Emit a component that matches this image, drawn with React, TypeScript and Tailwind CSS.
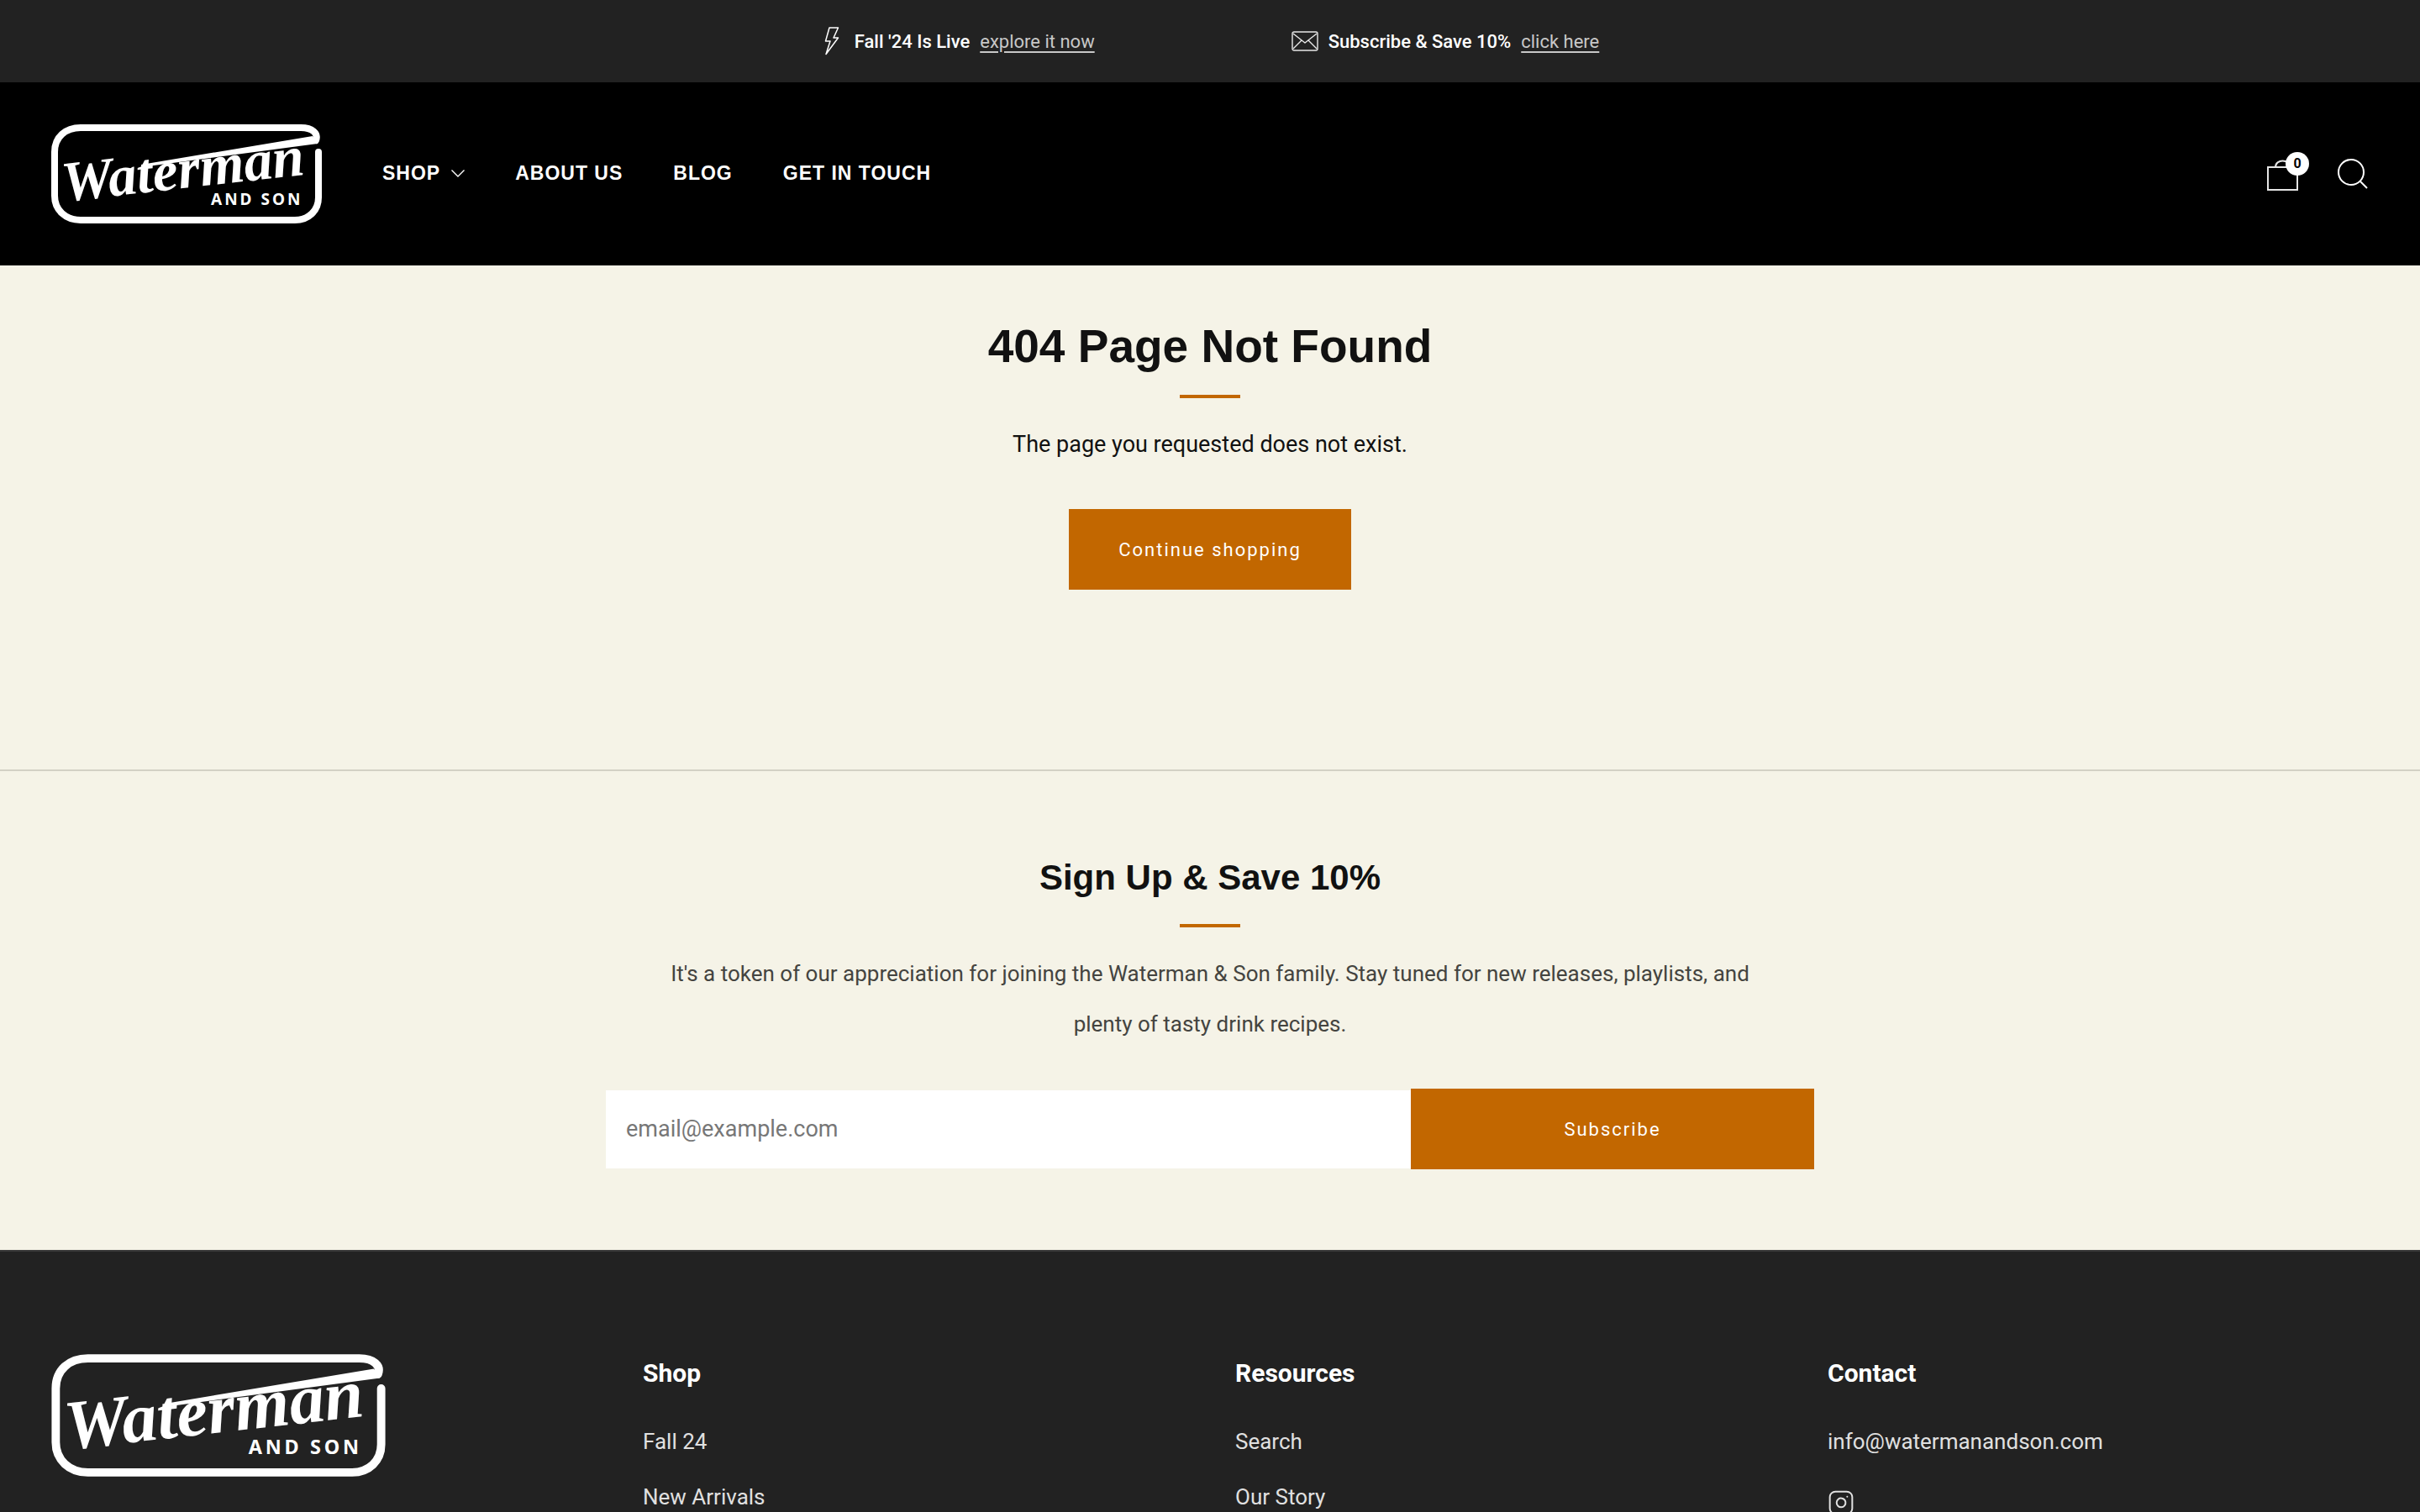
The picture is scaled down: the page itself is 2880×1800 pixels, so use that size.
import React from 'react';
import { Instagram } from 'lucide-react';

const Logo = ({ className }: { className: string }) => (
  <svg viewBox="0 0 324 120" className={className} fill="none">
    <path
      d="M319 34 V88 C319 104 307 115 291 115 H36 C18 115 5 103 5 86 V34 C5 16 18 5 36 5 H298 C312 5 319 12 316 20"
      stroke="white"
      strokeWidth="8"
      strokeLinecap="round"
      strokeLinejoin="round"
    />
    <path d="M312 15 L108 49 L108 52 L318 24 Z" fill="white" />
    <text
      x="16"
      y="93"
      fill="white"
      transform="rotate(-6.4 16 93)"
      style={{ fontFamily: '"Liberation Serif", serif', fontStyle: 'italic', fontWeight: 700, fontSize: 68 }}
    >
      Waterman
    </text>
    <text
      x="191"
      y="97"
      fill="white"
      style={{ fontFamily: '"Noto Sans", sans-serif', fontWeight: 700, fontSize: 19, letterSpacing: '3px' }}
    >
      AND SON
    </text>
  </svg>
);

const Bolt = () => (
  <svg width="18" height="34" viewBox="0 0 18 34" fill="none" stroke="white" strokeWidth="1.5" strokeLinejoin="round">
    <path d="M6 1 H16.5 L11 13 H16.5 L2 32.5 L7 17 H1.5 Z" />
  </svg>
);

const Envelope = () => (
  <svg width="32" height="24" viewBox="0 0 32 24" fill="none" stroke="#e8e8e8" strokeWidth="1.4" strokeLinejoin="round">
    <rect x="1" y="1" width="30" height="22" rx="2" />
    <path d="M2 3 L16 14 L30 3 M2 21 L12 11 M30 21 L20 11" />
  </svg>
);

const Announce = ({ icon, gap, text, link }: { icon: React.ReactNode; gap: string; text: string; link: string }) => (
  <div className="flex items-center gap-[12px] text-[22px]">
    <div className={gap}>{icon}</div>
    <span className="font-medium text-white">{text}</span>
    <a href="#" className="text-[#c8c8c8] underline underline-offset-4">{link}</a>
  </div>
);

const Heading = ({ children, className }: { children: React.ReactNode; className: string }) => (
  <h1 className={`font-['Liberation_Sans',sans-serif] font-bold text-[#111111] ${className}`}>{children}</h1>
);

const Rule = () => <div className="h-[4px] w-[72px] bg-[#c26700]" />;

const footerCols = [
  { title: 'Shop', links: ['Fall 24', 'New Arrivals'] },
  { title: 'Resources', links: ['Search', 'Our Story'] },
];

export default function App() {
  return (
    <div className="h-[1800px] overflow-hidden bg-[#f5f3e7] font-['Roboto',sans-serif]">
      <div className="flex h-[98px] items-center justify-center gap-[234px] bg-[#222222] pl-[4px]">
        <Announce icon={<Bolt />} gap="mr-[6px]" text="Fall '24 Is Live" link="explore it now" />
        <Announce icon={<Envelope />} gap="" text="Subscribe & Save 10%" link="click here" />
      </div>

      <header className="flex h-[218px] items-center justify-between bg-black pl-[60px] pr-[62px]">
        <div className="flex items-center">
          <Logo className="h-[120px] w-[324px]" />
          <nav className="ml-[71px] flex items-center gap-[60px] pb-[2px] font-['Liberation_Sans',sans-serif] text-[23px] font-bold tracking-[1px] text-white">
            <a href="#" className="flex items-center gap-[13px]">
              SHOP
              <svg width="16" height="9" viewBox="0 0 16 9" fill="none" stroke="white" strokeWidth="1.4">
                <path d="M0.5 0.5 L8 8 L15.5 0.5" />
              </svg>
            </a>
            <a href="#">ABOUT US</a>
            <a href="#">BLOG</a>
            <a href="#">GET IN TOUCH</a>
          </nav>
        </div>
        <div className="flex items-center gap-[46px] text-white">
          <div className="relative mt-[2px]">
            <svg width="38" height="38" viewBox="0 0 38 38" fill="none" stroke="#e5e5e5" strokeWidth="2">
              <rect x="1" y="10" width="35" height="27" />
              <path d="M10 10 C10 0 27 0 27 10" />
            </svg>
            <span className="absolute -right-[12px] -top-[8px] flex h-[28px] w-[28px] items-center justify-center rounded-full bg-white text-[16px] font-bold text-black">0</span>
          </div>
          <svg width="36" height="36" viewBox="0 0 36 36" fill="none" stroke="white" strokeWidth="2">
            <circle cx="16" cy="16" r="15" />
            <path d="M27 27 L35 35" />
          </svg>
        </div>
      </header>

      <main className="flex h-[602px] flex-col items-center border-b-2 border-[#d3d1c5]">
        <Heading className="mt-[58px] text-[55px] leading-[76px]">404 Page Not Found</Heading>
        <div className="mt-[20px]"><Rule /></div>
        <p className="mt-[35px] text-[27px] leading-[40px] text-[#111111]">The page you requested does not exist.</p>
        <a href="#" className="mt-[57px] flex h-[96px] w-[336px] items-center justify-center bg-[#c26700] text-[22px] tracking-[2px] text-white">Continue shopping</a>
      </main>

      <section className="flex h-[570px] flex-col items-center">
        <Heading className="mt-[95px] text-[42px] leading-[64px]">Sign Up &amp; Save 10%</Heading>
        <div className="mt-[23px]"><Rule /></div>
        <p className="mt-[25px] w-[1300px] text-center text-[26px] leading-[60px] text-[#444440]">
          It's a token of our appreciation for joining the Waterman &amp; Son family. Stay tuned for new releases, playlists, and plenty of tasty drink recipes.
        </p>
        <form className="mt-[47px] flex h-[96px] w-[1438px] items-center">
          <input placeholder="email@example.com" className="h-[93px] flex-1 bg-white px-[24px] text-[27px] placeholder:text-[#777777]" />
          <button type="button" className="h-[96px] w-[480px] bg-[#c26700] text-[22px] tracking-[2px] text-white">Subscribe</button>
        </form>
      </section>

      <footer className="grid h-[312px] grid-cols-4 border-t-2 border-[#3a3a3a] bg-[#222222] pl-[60px] pt-[125px]">
        <Logo className="-mt-[4px] h-[148px] w-[400px]" />
        {footerCols.map((col) => (
          <div key={col.title}>
            <h3 className="text-[30px] font-bold leading-[40px] text-white">{col.title}</h3>
            <ul className="mt-[41px] flex flex-col gap-[26px] text-[26px] leading-[40px] text-[#e0e0e0]">
              {col.links.map((l) => <li key={l}>{l}</li>)}
            </ul>
          </div>
        ))}
        <div>
          <h3 className="text-[30px] font-bold leading-[40px] text-white">Contact</h3>
          <p className="mt-[41px] text-[26px] leading-[40px] text-[#e0e0e0]">info@watermanandson.com</p>
          <Instagram size={32} strokeWidth={1.5} className="mt-[37px] text-[#e0e0e0]" />
        </div>
      </footer>
    </div>
  );
}
